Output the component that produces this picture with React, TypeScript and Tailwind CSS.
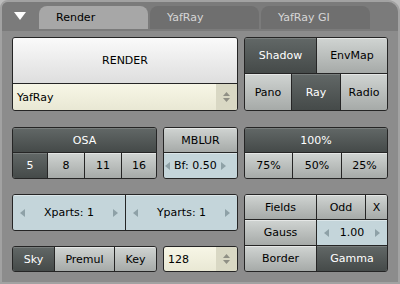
import React from "react";

const light = "bg-linear-to-b from-[#d0d4d2] to-[#a6aaa8] text-black shadow-[inset_0_1px_0_rgba(255,255,255,0.45)]";
const dark = "bg-linear-to-b from-[#626867] to-[#454a49] text-white shadow-[inset_0_1px_0_rgba(255,255,255,0.15)]";
const num = "bg-[#c4d5da] text-black shadow-[inset_0_1px_0_rgba(255,255,255,0.4)]";

type BtnProps = { label: string; kind?: "light" | "dark" | "num"; className?: string };

const Btn = ({ label, kind = "light", className = "" }: BtnProps) => {
  const tone = kind === "dark" ? dark : kind === "num" ? num : light;
  return <div className={`flex items-center justify-center ${tone} ${className}`}>{label}</div>;
};

const Tri = ({ dir }: { dir: "l" | "r" }) => (
  <svg width="5" height="8" viewBox="0 0 5 8" className="shrink-0">
    <path d={dir === "l" ? "M5 0 L0 4 L5 8Z" : "M0 0 L5 4 L0 8Z"} fill="#8ea1a7" />
  </svg>
);

const Spin = () => (
  <div className="flex h-full w-[21px] flex-col items-center justify-center gap-[2px] bg-[#d9d8c4]">
    <svg width="7" height="4" viewBox="0 0 7 4"><path d="M0 4 L3.5 0 L7 4Z" fill="#8f8f85" /></svg>
    <svg width="7" height="4" viewBox="0 0 7 4"><path d="M0 0 L3.5 4 L7 0Z" fill="#8f8f85" /></svg>
  </div>
);

const NumField = ({ label, className = "" }: { label: string; className?: string }) => (
  <div className={`flex items-center justify-between ${num} ${className}`}>
    <Tri dir="l" />
    <span>{label}</span>
    <Tri dir="r" />
  </div>
);

const Tab = ({ label, active }: { label: string; active?: boolean }) => (
  <div
    className={`flex h-[23px] w-[109px] items-center rounded-t-[8px] pl-[17px] ${
      active ? "bg-[#a7a7a7] text-black" : "bg-[#6f6f6f] text-[#d6d6d6]"
    }`}
  >
    {label}
  </div>
);

const box = "rounded-[3px] border border-[#252525] overflow-hidden";

export default function App() {
  return (
    <div className="h-[284px] w-[400px] bg-[#bdbdbd] font-['DejaVu_Sans',sans-serif] text-[11px] leading-none">
      <div className="flex h-full w-full flex-col overflow-hidden rounded-tl-[8px] rounded-tr-[12px] border-2 border-[#a2a2a2] bg-[#8c8c8c]">
        {/* header with tabs */}
        <div className="flex h-[29px] items-start bg-[#7b7b7b] pt-[4px]">
          <div className="ml-[12px] mt-[6px] h-0 w-0 border-x-[6px] border-t-[8px] border-x-transparent border-t-white" />
          <div className="ml-[13px] flex gap-[2px]">
            <Tab label="Render" active />
            <Tab label="YafRay" />
            <Tab label="YafRay GI" />
          </div>
        </div>

        <div className="flex flex-col pl-[10px] pt-[6px]">
          {/* row 1 */}
          <div className="flex gap-[6px]">
            <div className={`flex h-[74px] w-[226px] flex-col ${box}`}>
              <div className="flex flex-1 items-center justify-center border-b border-[#252525] bg-linear-to-b from-[#fafafa] to-[#dedede] text-black">
                RENDER
              </div>
              <div className="flex h-[26px] items-center bg-linear-to-b from-[#f7f6e6] to-[#e9e8d4] text-black">
                <span className="flex-1 pl-[4px]">YafRay</span>
                <Spin />
              </div>
            </div>
            <div className={`flex h-[74px] w-[144px] flex-col ${box}`}>
              <div className="flex h-[36px] border-b border-[#252525]">
                <Btn label="Shadow" kind="dark" className="w-[72px] border-r border-[#252525]" />
                <Btn label="EnvMap" className="flex-1" />
              </div>
              <div className="flex flex-1">
                <Btn label="Pano" className="w-[47px] border-r border-[#252525]" />
                <Btn label="Ray" kind="dark" className="w-[49px] border-r border-[#252525]" />
                <Btn label="Radio" className="flex-1" />
              </div>
            </div>
          </div>

          {/* row 2 */}
          <div className="mt-[16px] flex gap-[6px]">
            <div className={`flex h-[52px] w-[145px] flex-col ${box}`}>
              <Btn label="OSA" kind="dark" className="h-[25px] border-b border-[#252525]" />
              <div className="flex flex-1">
                <Btn label="5" kind="dark" className="w-[35px] border-r border-[#252525]" />
                <Btn label="8" className="w-[37px] border-r border-[#252525]" />
                <Btn label="11" className="w-[37px] border-r border-[#252525]" />
                <Btn label="16" className="flex-1" />
              </div>
            </div>
            <div className={`flex h-[52px] w-[75px] flex-col ${box}`}>
              <Btn label="MBLUR" className="h-[25px] border-b border-[#252525]" />
              <div className={`flex flex-1 items-center gap-[4px] pl-[1px] ${num}`}>
                <Tri dir="l" />
                <span>Bf: 0.50</span>
                <Tri dir="r" />
              </div>
            </div>
            <div className={`flex h-[52px] w-[144px] flex-col ${box}`}>
              <Btn label="100%" kind="dark" className="h-[25px] border-b border-[#252525]" />
              <div className="flex flex-1">
                <Btn label="75%" className="w-[48px] border-r border-[#252525]" />
                <Btn label="50%" className="w-[49px] border-r border-[#252525]" />
                <Btn label="25%" className="flex-1" />
              </div>
            </div>
          </div>

          {/* row 3 */}
          <div className="mt-[15px] flex gap-[6px]">
            <div className="flex w-[226px] flex-col">
              <div className={`flex h-[37px] ${box}`}>
                <NumField label="Xparts: 1" className="w-[113px] border-r border-[#252525] px-[7px]" />
                <NumField label="Yparts: 1" className="flex-1 px-[7px]" />
              </div>
              <div className="mt-[15px] flex gap-[6px]">
                <div className={`flex h-[26px] w-[145px] ${box}`}>
                  <Btn label="Sky" kind="dark" className="w-[42px] border-r border-[#252525]" />
                  <Btn label="Premul" className="w-[60px] border-r border-[#252525]" />
                  <Btn label="Key" className="flex-1" />
                </div>
                <div className={`flex h-[26px] w-[75px] items-center bg-linear-to-b from-[#f7f6e6] to-[#e9e8d4] text-black ${box}`}>
                  <span className="flex-1 pl-[4px]">128</span>
                  <Spin />
                </div>
              </div>
            </div>
            <div className={`flex h-[78px] w-[144px] flex-col ${box}`}>
              <div className="flex h-[25px] border-b border-[#252525]">
                <Btn label="Fields" className="w-[72px] border-r border-[#252525]" />
                <Btn label="Odd" className="w-[49px] border-r border-[#252525]" />
                <Btn label="X" className="flex-1" />
              </div>
              <div className="flex h-[26px] border-b border-[#252525]">
                <Btn label="Gauss" className="w-[72px] border-r border-[#252525]" />
                <NumField label="1.00" className="flex-1 px-[7px]" />
              </div>
              <div className="flex flex-1">
                <Btn label="Border" className="w-[72px] border-r border-[#252525]" />
                <Btn label="Gamma" kind="dark" className="flex-1" />
              </div>
            </div>
          </div>
        </div>
      </div>
    </div>
  );
}
